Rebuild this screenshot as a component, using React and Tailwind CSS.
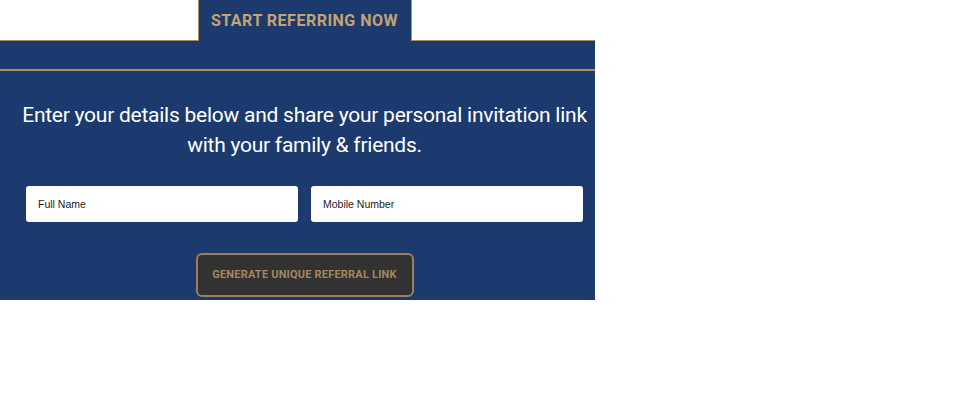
export default function App() {
  return (
    <div className="w-[953px] h-[417px] bg-white">
      <div className="w-[595px] h-[300px] overflow-hidden">
        <div className="w-[609px]">
          {/* TAB ROW */}
          <div className="flex h-[41px]">
            <div className="flex-1 border-b border-[#ae8c5c] bg-white" />
            <div className="w-[214px] bg-[#1c3a6e] border-x border-[#ae8c5c] flex items-center justify-center">
              <span className="font-['Roboto',sans-serif] text-[16px] font-bold tracking-[0.5px] whitespace-nowrap text-[#c4a470] pt-[1px]">
                START REFERRING NOW
              </span>
            </div>
            <div className="flex-1 border-b border-[#ae8c5c] bg-white" />
          </div>

          {/* PANEL */}
          <div className="bg-[#1c3a6e] h-[259px]">
            <div className="h-[28px]" />
            <div className="h-[2px] bg-[#ae8c5c]" />
            <p className="pt-[29px] text-center text-white font-['Roboto',sans-serif] text-[21px] tracking-[-0.25px] leading-[30px] whitespace-nowrap">
              Enter your details below and share your personal invitation link
              <br />
              with your family &amp; friends.
            </p>
            <div className="flex gap-[13px] px-[26px] mt-[26px]">
              <input
                type="text"
                placeholder="Full Name"
                className="w-[272px] h-[36px] bg-white rounded-[3px] px-3 font-['Liberation_Sans',Arial,sans-serif] text-[10.5px] text-[#222] placeholder:text-[#222] outline-none"
              />
              <input
                type="tel"
                placeholder="Mobile Number"
                className="w-[272px] h-[36px] bg-white rounded-[3px] px-3 font-['Liberation_Sans',Arial,sans-serif] text-[10.5px] text-[#222] placeholder:text-[#222] outline-none"
              />
            </div>
            <div className="flex justify-center mt-[31px]">
              <button
                type="button"
                className="w-[218px] h-[44px] bg-[#333232] border-2 border-[#9c7f56] rounded-[6px] font-['Roboto',sans-serif] text-[11px] font-bold tracking-[0.2px] whitespace-nowrap text-[#a4875e]"
              >
                GENERATE UNIQUE REFERRAL LINK
              </button>
            </div>
          </div>
        </div>
      </div>
    </div>
  );
}
